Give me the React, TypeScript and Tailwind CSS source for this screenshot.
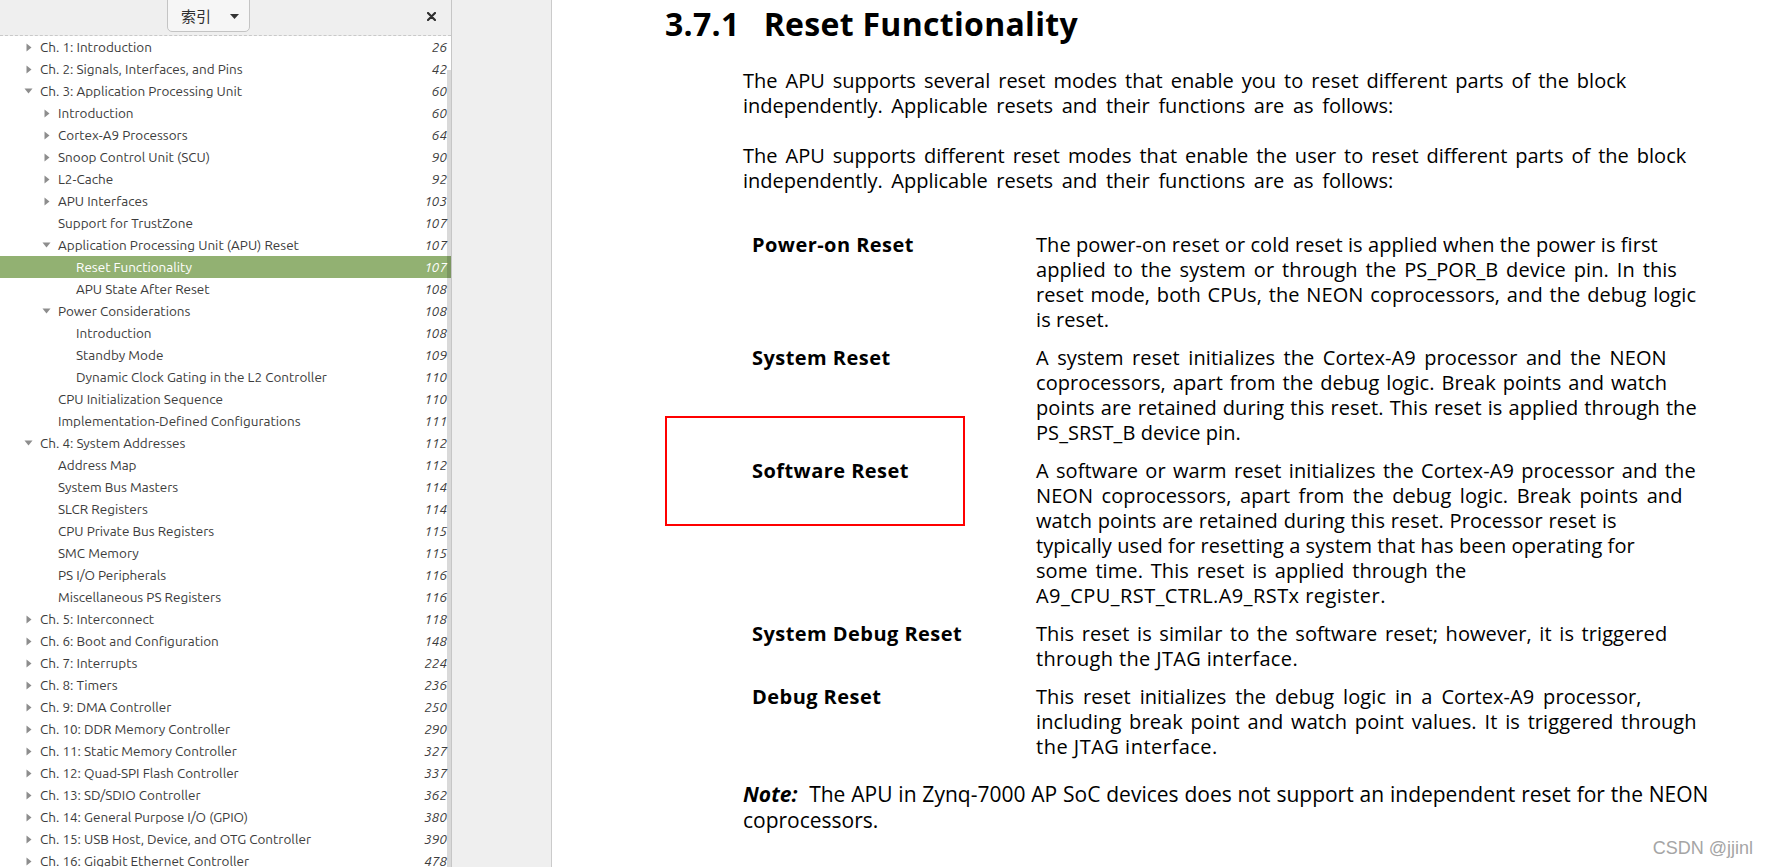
import React from 'react';

type Row = {
  level: number;
  title: string;
  page: number;
  arrow?: 'right' | 'down';
  selected?: boolean;
};

type Line = { t: string; ws?: number; ls?: number };

const TOC: Row[] = [
  { level: 0, title: 'Ch. 1: Introduction', page: 26, arrow: 'right' },
  { level: 0, title: 'Ch. 2: Signals, Interfaces, and Pins', page: 42, arrow: 'right' },
  { level: 0, title: 'Ch. 3: Application Processing Unit', page: 60, arrow: 'down' },
  { level: 1, title: 'Introduction', page: 60, arrow: 'right' },
  { level: 1, title: 'Cortex-A9 Processors', page: 64, arrow: 'right' },
  { level: 1, title: 'Snoop Control Unit (SCU)', page: 90, arrow: 'right' },
  { level: 1, title: 'L2-Cache', page: 92, arrow: 'right' },
  { level: 1, title: 'APU Interfaces', page: 103, arrow: 'right' },
  { level: 1, title: 'Support for TrustZone', page: 107 },
  { level: 1, title: 'Application Processing Unit (APU) Reset', page: 107, arrow: 'down' },
  { level: 2, title: 'Reset Functionality', page: 107, selected: true },
  { level: 2, title: 'APU State After Reset', page: 108 },
  { level: 1, title: 'Power Considerations', page: 108, arrow: 'down' },
  { level: 2, title: 'Introduction', page: 108 },
  { level: 2, title: 'Standby Mode', page: 109 },
  { level: 2, title: 'Dynamic Clock Gating in the L2 Controller', page: 110 },
  { level: 1, title: 'CPU Initialization Sequence', page: 110 },
  { level: 1, title: 'Implementation-Defined Configurations', page: 111 },
  { level: 0, title: 'Ch. 4: System Addresses', page: 112, arrow: 'down' },
  { level: 1, title: 'Address Map', page: 112 },
  { level: 1, title: 'System Bus Masters', page: 114 },
  { level: 1, title: 'SLCR Registers', page: 114 },
  { level: 1, title: 'CPU Private Bus Registers', page: 115 },
  { level: 1, title: 'SMC Memory', page: 115 },
  { level: 1, title: 'PS I/O Peripherals', page: 116 },
  { level: 1, title: 'Miscellaneous PS Registers', page: 116 },
  { level: 0, title: 'Ch. 5: Interconnect', page: 118, arrow: 'right' },
  { level: 0, title: 'Ch. 6: Boot and Configuration', page: 148, arrow: 'right' },
  { level: 0, title: 'Ch. 7: Interrupts', page: 224, arrow: 'right' },
  { level: 0, title: 'Ch. 8: Timers', page: 236, arrow: 'right' },
  { level: 0, title: 'Ch. 9: DMA Controller', page: 250, arrow: 'right' },
  { level: 0, title: 'Ch. 10: DDR Memory Controller', page: 290, arrow: 'right' },
  { level: 0, title: 'Ch. 11: Static Memory Controller', page: 327, arrow: 'right' },
  { level: 0, title: 'Ch. 12: Quad-SPI Flash Controller', page: 337, arrow: 'right' },
  { level: 0, title: 'Ch. 13: SD/SDIO Controller', page: 362, arrow: 'right' },
  { level: 0, title: 'Ch. 14: General Purpose I/O (GPIO)', page: 380, arrow: 'right' },
  { level: 0, title: 'Ch. 15: USB Host, Device, and OTG Controller', page: 390, arrow: 'right' },
  { level: 0, title: 'Ch. 16: Gigabit Ethernet Controller', page: 478, arrow: 'right' },
];

const INTRO: Line[][] = [
  [
    { t: 'The APU supports several reset modes that enable you to reset different parts of the block', ws: 2.8 },
    { t: 'independently. Applicable resets and their functions are as follows:', ws: 3.4 },
  ],
  [
    { t: 'The APU supports different reset modes that enable the user to reset different parts of the block', ws: 2.8 },
    { t: 'independently. Applicable resets and their functions are as follows:', ws: 3.4 },
  ],
];

// descriptions are kept line by line, like the PDF page; ws/ls nudge each line to its width there
const RESETS: { label: string; lines: Line[] }[] = [
  {
    label: 'Power-on Reset',
    lines: [
      { t: 'The power-on reset or cold reset is applied when the power is first' },
      { t: 'applied to the system or through the PS_POR_B device pin. In this', ws: 2.6 },
      { t: 'reset mode, both CPUs, the NEON coprocessors, and the debug logic', ws: 1.5 },
      { t: 'is reset.' },
    ],
  },
  {
    label: 'System Reset',
    lines: [
      { t: 'A system reset initializes the Cortex-A9 processor and the NEON', ws: 3.2 },
      { t: 'coprocessors, apart from the debug logic. Break points and watch', ws: 1.6 },
      { t: 'points are retained during this reset. This reset is applied through the', ws: 0.8 },
      { t: 'PS_SRST_B device pin.' },
    ],
  },
  {
    label: 'Software Reset',
    lines: [
      { t: 'A software or warm reset initializes the Cortex-A9 processor and the', ws: 2 },
      { t: 'NEON coprocessors, apart from the debug logic. Break points and', ws: 3.2 },
      { t: 'watch points are retained during this reset. Processor reset is', ws: 0.5 },
      { t: 'typically used for resetting a system that has been operating for' },
      { t: 'some time. This reset is applied through the', ws: 2.5 },
      { t: 'A9_CPU_RST_CTRL.A9_RSTx register.', ls: 0.45 },
    ],
  },
  {
    label: 'System Debug Reset',
    lines: [
      { t: 'This reset is similar to the software reset; however, it is triggered', ws: 2.3 },
      { t: 'through the JTAG interface.', ls: 0.35 },
    ],
  },
  {
    label: 'Debug Reset',
    lines: [
      { t: 'This reset initializes the debug logic in a Cortex-A9 processor,', ws: 3.6 },
      { t: 'including break point and watch point values. It is triggered through', ws: 2.5 },
      { t: 'the JTAG interface.', ls: 0.5 },
    ],
  },
];

function Arrow({ dir, light }: { dir?: 'right' | 'down'; light?: boolean }) {
  if (!dir) return null;
  const fill = light ? '#ffffff' : '#8d8d8d';
  return dir === 'right' ? (
    <svg width="6" height="9" viewBox="0 0 6 9">
      <path d="M0.5 0.5 L5.5 4.5 L0.5 8.5 Z" fill={fill} />
    </svg>
  ) : (
    <svg width="9" height="6" viewBox="0 0 9 6">
      <path d="M0.5 0.5 L8.5 0.5 L4.5 5.5 Z" fill={fill} />
    </svg>
  );
}

function TextLine({ line }: { line: Line }) {
  return (
    <span
      className="block whitespace-nowrap"
      style={{ wordSpacing: line.ws ? `${line.ws}px` : undefined, letterSpacing: line.ls ? `${line.ls}px` : undefined }}
    >
      {line.t}
    </span>
  );
}

function Sidebar() {
  return (
    <aside className="relative w-[452px] shrink-0 h-full flex flex-col bg-white border-r border-[#c6c6c6] overflow-hidden font-['Ubuntu','Lato',sans-serif]">
      <div className="h-[36px] shrink-0 bg-[#efefef] border-b border-dashed border-[#c9c9c9] relative">
        <button className="absolute left-[167px] top-[-4px] w-[83px] h-[36px] rounded-b-[5px] border border-[#c4c4c4] bg-[#f6f6f6] flex items-center justify-center gap-[19px] pt-[4px] pl-[3px]">
          <span className="text-[15px] text-[#2f2f2f] font-['Noto_Sans_CJK_SC',sans-serif]">索引</span>
          <svg width="9" height="5" viewBox="0 0 9 5">
            <path d="M0 0 L9 0 L4.5 5 Z" fill="#333333" />
          </svg>
        </button>
        <svg className="absolute left-[427px] top-[12px]" width="9" height="9" viewBox="0 0 9 9">
          <path d="M1 1 L8 8 M8 1 L1 8" stroke="#2e2e2e" strokeWidth="2.2" strokeLinecap="round" />
        </svg>
      </div>
      <div className="flex flex-col">
        {TOC.map((row, i) => (
          <div
            key={i}
            className={`h-[22px] shrink-0 flex items-center pr-[4px] text-[13.5px] ${
              row.selected ? 'bg-[#92b172] text-white' : 'text-[#3c3c3c]'
            }`}
            style={{ paddingLeft: 22 + row.level * 18 }}
          >
            <span className="w-[13px] flex justify-center shrink-0">
              <Arrow dir={row.arrow} light={row.selected} />
            </span>
            <span className="ml-[5px] flex-1 whitespace-nowrap">{row.title}</span>
            <span className="italic whitespace-nowrap">{row.page}</span>
          </div>
        ))}
      </div>
      <div className="absolute left-[447px] top-[70px] w-[4px] bottom-0 bg-black/15" />
    </aside>
  );
}

function PdfPage() {
  return (
    <main className="relative flex-1 h-full bg-white overflow-hidden text-black font-['Open_Sans','Noto_Sans',sans-serif]">
      <div className="pl-[113px] pt-[5px]">
        <h1 className="text-[32px] leading-[38px] font-bold tracking-[0.3px] whitespace-nowrap">
          <span>3.7.1</span>
          <span className="ml-[24px]">Reset Functionality</span>
        </h1>
      </div>

      <div className="pl-[191px] mt-[25px] text-[20px] leading-[25px] flex flex-col gap-[25px]">
        {INTRO.map((para, i) => (
          <p key={i}>
            {para.map((line) => (
              <TextLine key={line.t} line={line} />
            ))}
          </p>
        ))}
      </div>

      <div className="pl-[200px] mt-[38.5px] flex flex-col gap-[13px] text-[20px] leading-[25px]">
        {RESETS.map((r) => (
          <div key={r.label} className="grid grid-cols-[284px_1fr]">
            <div className="font-bold whitespace-nowrap tracking-[0.45px]">{r.label}</div>
            <div className="flex flex-col tracking-[0.08px]">
              {r.lines.map((line) => (
                <TextLine key={line.t} line={line} />
              ))}
            </div>
          </div>
        ))}
      </div>

      <p className="pl-[191px] mt-[22px] text-[21px] leading-[26px] whitespace-nowrap">
        <b className="italic">Note:</b>
        <span className="whitespace-pre [word-spacing:0.4px]">  The APU in Zynq-7000 AP SoC devices does not support an independent reset for the NEON</span>
        <br />
        coprocessors.
      </p>

      {/* red annotation box drawn over the page */}
      <div className="absolute left-[113px] top-[416px] w-[300px] h-[110px] border-2 border-[#ff0000]" />

      <div className="absolute right-[15px] top-[836px] text-[18px] leading-[24px] text-[#a5a5a5] font-['Liberation_Sans',Arial,sans-serif]">
        CSDN @jjinl
      </div>
    </main>
  );
}

export default function App() {
  return (
    <div className="w-[1768px] h-[867px] flex overflow-hidden bg-white">
      <Sidebar />
      <div className="w-[100px] shrink-0 h-full bg-[#efefef] border-r border-[#cbcbcb]" />
      <PdfPage />
    </div>
  );
}
